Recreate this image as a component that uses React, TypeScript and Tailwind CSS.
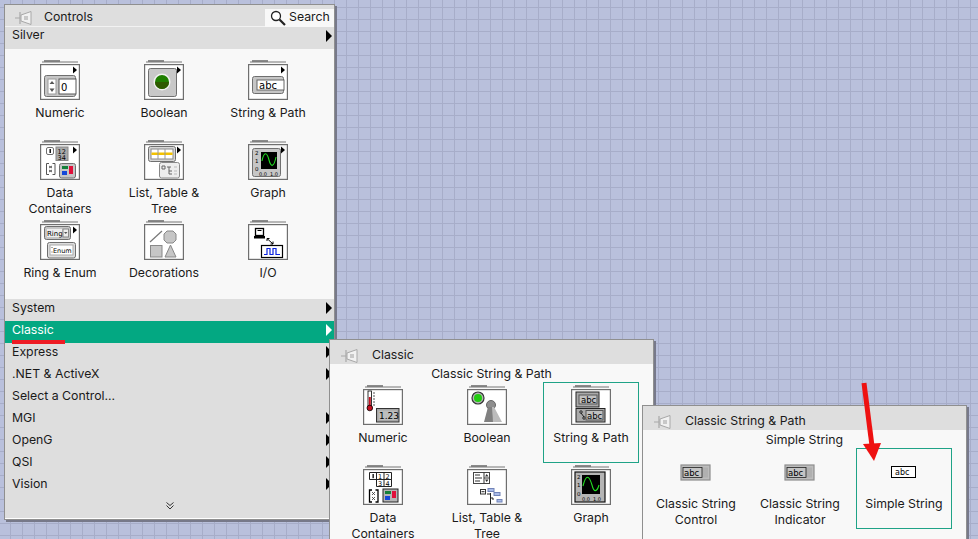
import type { ReactNode } from "react";

const G = "#6f6f6f";

function Frame({ children, arrow, bg = "#ffffff" }: { children?: ReactNode; arrow?: boolean; bg?: string }) {
  return (
    <svg width="40" height="40" viewBox="0 0 40 40" className="block">
      <rect x="4" y="0" width="16" height="2" fill="#8a8a8a" />
      <rect x="2" y="1.5" width="36" height="1" fill="#777777" />
      <rect x="0.6" y="4.6" width="38.8" height="34.8" fill={bg} stroke={G} strokeWidth="1.2" />
      {children}
      {arrow && <path d="M33 6.5 L37 10 L33 13.5 Z" fill="#000000" />}
    </svg>
  );
}

function Mono({ x, y, size = 10, children, fill = "#000000" }: { x: number; y: number; size?: number; children: ReactNode; fill?: string }) {
  return (
    <text x={x} y={y} fontSize={size} fontFamily="'DejaVu Sans', sans-serif" fill={fill}>
      {children}
    </text>
  );
}

const icons: Record<string, ReactNode> = {
  numeric: (
    <Frame arrow>
      <rect x="4.5" y="15.5" width="31" height="21" rx="2" fill="#c6c6c6" stroke={G} />
      <rect x="8" y="19" width="8" height="15" fill="#ffffff" stroke="#999999" />
      <path d="M12 21 L14.5 24 L9.5 24 Z M12 32 L14.5 28.5 L9.5 28.5 Z" fill="#555555" />
      <rect x="19" y="19" width="17" height="15" fill="#ffffff" stroke="#555555" />
      <Mono x={21} y={30.5} size={10}>0</Mono>
    </Frame>
  ),
  boolean: (
    <Frame arrow>
      <rect x="4.5" y="8.5" width="28" height="28" rx="2" fill="#c8c8c8" stroke={G} />
      <circle cx="18" cy="22" r="8.5" fill="#f2f2f2" />
      <circle cx="18" cy="22" r="7" fill="#1f7f00" />
      <path d="M11 22 A7 7 0 0 0 25 22 Z" fill="#2e5a00" />
    </Frame>
  ),
  string: (
    <Frame arrow>
      <rect x="4.5" y="16.5" width="31" height="17" rx="2" fill="#c6c6c6" stroke={G} />
      <rect x="9" y="20" width="27" height="10" fill="#ffffff" stroke="#666666" />
      <Mono x={11} y={28.5} size={10}>abc</Mono>
    </Frame>
  ),
  data: (
    <Frame arrow>
      <rect x="6.5" y="7.5" width="7" height="7" rx="1.5" fill="#ffffff" stroke={G} />
      <rect x="9.5" y="9" width="1.4" height="4" fill="#000000" />
      <rect x="16" y="7" width="12" height="13.5" fill="#a9a9a9" stroke="#888888" />
      <Mono x={17.5} y={13.5} size={6.5}>12</Mono>
      <Mono x={17.5} y={19.5} size={6.5}>34</Mono>
      <path d="M9 23.5 H6.5 V34.5 H9 M12.5 23.5 H15 V34.5 H12.5" fill="none" stroke="#555555" />
      <path d="M9 26 L12 28 M12 26 L9 28 M9 30 L12 32 M12 30 L9 32" stroke="#333333" strokeWidth="0.8" />
      <rect x="19.5" y="23.5" width="16" height="14.5" rx="2" fill="#c6c6c6" stroke={G} />
      <rect x="22" y="26" width="6" height="3" fill="#14803a" />
      <rect x="22" y="31" width="5" height="4" fill="#1447d8" />
      <rect x="29" y="26" width="4" height="8" fill="#e0103a" />
    </Frame>
  ),
  list: (
    <Frame arrow>
      <rect x="4.5" y="6.5" width="27" height="15" rx="2" fill="#d6d6d6" stroke={G} />
      <rect x="7" y="9" width="22" height="10" fill="#ffffff" stroke="#888888" />
      <rect x="7.5" y="12.5" width="21" height="2.5" fill="#f3c200" />
      <path d="M14 9 V19 M21 9 V19" stroke="#999999" />
      <rect x="15.5" y="22.5" width="20" height="15.5" rx="2" fill="#eeeeee" stroke="#888888" />
      <path d="M18 26 H21 V29 H18 Z M23 27 H27 M25 27 V34 H28 M25 31 H28" fill="none" stroke="#666666" />
      <path d="M30 27 H33 M30 31 H33 M30 34 H33" stroke="#bbbbbb" />
    </Frame>
  ),
  graph: (
    <Frame arrow bg="#f4f4f4">
      <rect x="4.5" y="8.5" width="28" height="28" rx="2" fill="#c6c6c6" stroke={G} />
      <rect x="13" y="12" width="16" height="17" fill="#000000" />
      <path d="M14 21 C16 11 19 12 21 20 C23 28 26 27 28 17" fill="none" stroke="#22dd22" strokeWidth="1.1" />
      <Mono x={7} y={15} size={5.5}>2</Mono>
      <Mono x={7} y={23} size={5.5}>1</Mono>
      <Mono x={7} y={31} size={5.5}>0</Mono>
      <Mono x={11} y={35.5} size={5}>0.0</Mono>
      <Mono x={22} y={35.5} size={5}>1.0</Mono>
    </Frame>
  ),
  ring: (
    <Frame arrow>
      <rect x="4.5" y="6.5" width="26" height="13" rx="2" fill="#c6c6c6" stroke={G} />
      <rect x="7" y="9" width="15" height="8" fill="#eeeeee" />
      <Mono x={7} y={16} size={7}>Ring</Mono>
      <rect x="23" y="9" width="5.5" height="8" fill="#eeeeee" stroke="#888888" />
      <path d="M24 12 H27.5 L25.75 14 Z" fill="#555555" />
      <rect x="7.5" y="22.5" width="28" height="15.5" rx="2" fill="#dddddd" stroke={G} />
      <rect x="10" y="25" width="23" height="10" fill="#ffffff" stroke="#aaaaaa" />
      <Mono x={13} y={33} size={6.5}>Enum</Mono>
      <path d="M11.5 27.5 H12.5 M11.5 32 H12.5" stroke="#555555" />
    </Frame>
  ),
  deco: (
    <Frame>
      <path d="M6 22 L18 11" stroke="#777777" strokeWidth="1.2" />
      <path d="M23 11 H29 L32 14 V20 L29 23 H23 L20 20 V14 Z" fill="#c6c6c6" stroke="#888888" />
      <rect x="6.5" y="25.5" width="11.5" height="11.5" fill="#c6c6c6" stroke="#888888" />
      <path d="M26.5 25 L32 37 H21 Z" fill="#c6c6c6" stroke="#888888" />
    </Frame>
  ),
  io: (
    <Frame>
      <rect x="7.5" y="8.5" width="8" height="7" fill="#ffffff" stroke="#000000" strokeWidth="1.3" />
      <rect x="9.5" y="10" width="4" height="1" fill="#000000" />
      <rect x="6" y="16" width="11" height="2.5" fill="#000000" />
      <path d="M19 18.5 L25 24 M19 18.5 H21.5 M19 18.5 V21 M25 24 H22.5 M25 24 V21.5" stroke="#000000" fill="none" />
      <rect x="13.5" y="25.5" width="21" height="12" fill="#ffffff" stroke="#000000" strokeWidth="1.2" />
      <path d="M16 34.5 H19 V28.5 H22 V34.5 H25 V28.5 H28 V34.5 H32" fill="none" stroke="#0a22e0" strokeWidth="1.2" />
    </Frame>
  ),
  cNumeric: (
    <Frame>
      <rect x="5" y="6" width="3.5" height="15" fill="#ffffff" stroke="#000000" strokeWidth="0.8" />
      <rect x="5.8" y="12" width="2" height="10" fill="#c41020" />
      <circle cx="6.8" cy="23" r="2.8" fill="#c41020" stroke="#000000" strokeWidth="0.8" />
      <path d="M10 8 H12 M10 11 H12 M10 14 H12 M10 17 H12 M10 20 H12" stroke="#555555" />
      <rect x="13.5" y="23.5" width="22.5" height="13.5" fill="#a6a6a6" stroke="#333333" />
      <rect x="15.5" y="25.5" width="18.5" height="9.5" fill="#bdbdbd" />
      <Mono x={16} y={34} size={9}>1.23</Mono>
    </Frame>
  ),
  cBoolean: (
    <Frame>
      <circle cx="11" cy="13" r="6" fill="#b5b5b5" stroke="#333333" strokeWidth="1.2" />
      <circle cx="11" cy="13" r="4" fill="#22cc11" />
      <circle cx="24" cy="20" r="4.5" fill="#8e8e8e" stroke="#666666" />
      <path d="M21 22 H27 L35 37 H26 Z" fill="#bcbcbc" />
      <path d="M21 22 H25 L26 37 H17 Z" fill="#808080" />
    </Frame>
  ),
  cString: (
    <Frame>
      <rect x="5" y="7" width="23" height="15" fill="#aaaaaa" stroke="#222222" />
      <rect x="8" y="10" width="18" height="9" fill="#c0c0c0" stroke="#555555" />
      <Mono x={10} y={18} size={8.5}>abc</Mono>
      <rect x="5" y="23.5" width="29" height="13.5" fill="#aaaaaa" stroke="#222222" />
      <path d="M9 26 H11 V28 H9 Z M12 32 H14 V34 H12 Z M10 28 L13 32" fill="#ffffff" stroke="#111111" strokeWidth="0.9" />
      <rect x="15" y="25.5" width="17" height="9.5" fill="#c0c0c0" stroke="#555555" />
      <Mono x={16} y={33.5} size={8.5}>abc</Mono>
    </Frame>
  ),
  cData: (
    <Frame>
      <path d="M6.5 7.5 H28.5 V14.5 H6.5 Z M13.5 7.5 V14.5 M21 7.5 V14.5 M13.5 14.5 H28.5 V21.5 H13.5 Z M21 14.5 V21.5" fill="none" stroke="#222222" />
      <rect x="9.5" y="9" width="1.3" height="4.2" fill="#000000" />
      <Mono x={15} y={13.5} size={6.5}>1</Mono>
      <Mono x={22.5} y={13.5} size={6.5}>2</Mono>
      <Mono x={15} y={20.5} size={6.5}>3</Mono>
      <Mono x={22.5} y={20.5} size={6.5}>4</Mono>
      <path d="M9 25 H6.5 V37 H9 M12.5 25 H15 V37 H12.5" fill="none" stroke="#000000" strokeWidth="1.3" />
      <path d="M9 27 L12 30 M12 27 L9 30 M9 32 L12 35 M12 32 L9 35" stroke="#333333" strokeWidth="0.8" />
      <rect x="20" y="24" width="15" height="13" fill="#b5b5b5" stroke="#222222" />
      <rect x="22" y="26" width="6" height="3" fill="#14803a" />
      <rect x="22" y="31" width="5" height="4" fill="#1447d8" />
      <rect x="29" y="26" width="4" height="7" fill="#e0103a" />
    </Frame>
  ),
  cList: (
    <Frame>
      <rect x="6.5" y="7.5" width="16" height="11" fill="#ffffff" stroke="#444444" />
      <path d="M8 10 H13 M8 13 H15 M8 16 H13 M17 7.5 V18.5 M17 13 H22.5" stroke="#333333" />
      <path d="M19.7 9 L21.5 11.5 H18 Z M19.7 17 L21.5 14.5 H18 Z" fill="#333333" />
      <rect x="13.5" y="24.5" width="5" height="4.5" fill="#ffffff" stroke="#333333" />
      <path d="M14.5 26.7 H17.5 M23.5 28 V39 M23.5 33 H26 V35 M23.5 29 H20" stroke="#222222" fill="none" />
      <rect x="21" y="23.5" width="6" height="3" fill="#a9bbe8" stroke="#7284b8" />
      <rect x="27" y="27.5" width="6" height="3" fill="#a9bbe8" stroke="#7284b8" />
      <rect x="30" y="34.5" width="5" height="2.5" fill="#a9bbe8" stroke="#7284b8" />
    </Frame>
  ),
  cGraph: (
    <Frame bg="#ffffff">
      <rect x="4" y="7" width="30" height="30" fill="#b5b5b5" stroke="#111111" strokeWidth="1.2" />
      <rect x="11" y="10" width="18" height="19" fill="#000000" />
      <path d="M12 21 C15 9 18 10 21 20 C23 28 26 27 28 20" fill="none" stroke="#22dd22" strokeWidth="1.1" />
      <Mono x={6} y={14} size={5.5}>2</Mono>
      <Mono x={6} y={22} size={5.5}>1</Mono>
      <Mono x={6} y={31} size={5.5}>0</Mono>
      <Mono x={11} y={35.5} size={5}>0.0</Mono>
      <Mono x={22} y={35.5} size={5}>1.0</Mono>
    </Frame>
  ),
  classicControl: (
    <svg width="40" height="40" viewBox="0 0 40 40" className="block">
      <rect x="5" y="14" width="29" height="15" fill="#bdbdbd" stroke="#8e8e8e" strokeWidth="1.2" />
      <rect x="7" y="16.5" width="25" height="10" fill="#b0b0b0" />
      <rect x="7" y="16.5" width="19" height="10" fill="#c4c4c4" stroke="#222222" strokeWidth="0.8" />
      <Mono x={8} y={25} size={8.5}>abc</Mono>
    </svg>
  ),
  simple: (
    <svg width="40" height="40" viewBox="0 0 40 40" className="block">
      <rect x="7.5" y="15.5" width="24" height="11" fill="#ffffff" stroke="#000000" />
      <Mono x={11} y={24} size={8}>abc</Mono>
    </svg>
  ),
};

function Pin() {
  return (
    <svg width="18" height="16" viewBox="0 0 18 16" className="block">
      <path d="M0 8 H5 M5 2 V14" stroke="#a8a8a8" strokeWidth="1.2" />
      <path d="M6 5 L16 1.5 V14.5 L6 11 Z" fill="#f1f1f1" stroke="#a8a8a8" />
      <path d="M9 6 H13 V10 H9 Z" fill="#c8c8c8" />
    </svg>
  );
}

function Tile({ icon, label, selected }: { icon: string; label: string; selected?: boolean }) {
  return (
    <div className="relative flex flex-col items-center">
      {icons[icon]}
      <div className="mt-[5px] w-[92px] text-center text-[12.3px] leading-4 text-[#1a1a1a]">{label}</div>
      {selected && <div className="absolute left-[4px] top-[-3px] h-[81px] w-[96px] border border-[#1fa387]" />}
    </div>
  );
}

function Tiles({ children }: { children: ReactNode }) {
  return <div className="grid grid-cols-[repeat(3,104px)] auto-rows-[80px]">{children}</div>;
}

function MenuRow({ label, arrow = true, active, lift = "pb-[4px]" }: { label: string; arrow?: boolean; active?: boolean; lift?: string }) {
  return (
    <div className={`flex h-[22px] items-center justify-between pl-[7px] pr-[2px] text-[12.3px] ${lift} ${active ? "bg-[#03a882] text-white" : "bg-[#dedede] text-[#1a1a1a]"}`}>
      <span>{label}</span>
      {arrow && <span className={`h-0 w-0 border-y-[6px] border-l-[6px] border-y-transparent ${active ? "border-l-white" : "border-l-black"}`} />}
    </div>
  );
}

function Header({ title }: { title: string }) {
  return (
    <div className="flex h-[24px] items-center bg-[#dedede] pl-[11px] pt-[7px] text-[12.3px] text-[#1a1a1a]">
      <Pin />
      <span className="ml-[13px]">{title}</span>
    </div>
  );
}

export default function App() {
  return (
    <div className="relative h-[539px] w-[978px] overflow-hidden bg-[#b9c0dc] bg-[linear-gradient(#a7adc9_1px,transparent_1px),linear-gradient(90deg,#a7adc9_1px,transparent_1px)] bg-[size:12px_12px] bg-[position:10px_7px] font-['Inter',sans-serif]">
      {/* Controls palette */}
      <div className="absolute left-[4px] top-[4px] w-[331px] border border-[#8f8f8f] bg-[#dedede] shadow-[2px_2px_0_#77798a]">
        <div className="flex h-[22px] items-center border-b border-[#f2f2f2] bg-[#dedede] pl-[10px] pt-[4px] text-[12.3px] text-[#1a1a1a]">
          <Pin />
          <span className="ml-[11px]">Controls</span>
          <div className="ml-auto flex h-[18px] w-[69px] items-center gap-[3px] bg-[#f8f8f8] pl-[5px]">
            <svg width="16" height="16" viewBox="0 0 16 16">
              <circle cx="6" cy="6" r="4.5" fill="#ffffff" stroke="#222222" strokeWidth="1.3" />
              <path d="M9.5 9.5 L15 15" stroke="#222222" strokeWidth="2.2" />
            </svg>
            <span>Search</span>
          </div>
        </div>
        <MenuRow label="Silver" lift="pb-[5px]" />
        <div className="h-[250px] bg-[#f8f8f8] pl-[3px] pt-[11px]">
          <Tiles>
            <Tile icon="numeric" label="Numeric" />
            <Tile icon="boolean" label="Boolean" />
            <Tile icon="string" label="String & Path" />
            <Tile icon="data" label="Data Containers" />
            <Tile icon="list" label="List, Table & Tree" />
            <Tile icon="graph" label="Graph" />
            <Tile icon="ring" label="Ring & Enum" />
            <Tile icon="deco" label="Decorations" />
            <Tile icon="io" label="I/O" />
          </Tiles>
        </div>
        <MenuRow label="System" />
        <MenuRow label="Classic" active />
        <MenuRow label="Express" />
        <MenuRow label=".NET & ActiveX" />
        <MenuRow label="Select a Control..." arrow={false} />
        <MenuRow label="MGI" />
        <MenuRow label="OpenG" />
        <MenuRow label="QSI" />
        <MenuRow label="Vision" />
        <div className="flex h-[21px] items-center justify-center bg-[#dedede] pb-[3px]">
          <svg width="8" height="8" viewBox="0 0 8 8">
            <path d="M0.5 0.5 L4 3.5 L7.5 0.5 M0.5 3.5 L4 7 L7.5 3.5" fill="none" stroke="#333333" />
          </svg>
        </div>
        <div className="h-px bg-white" />
      </div>

      {/* red underline under Classic */}
      <div className="absolute left-[12px] top-[340px] h-[3.5px] w-[53px] bg-[#ee1c25]" />

      {/* Classic palette */}
      <div className="absolute left-[329px] top-[339px] h-[210px] w-[325px] border border-[#8f8f8f] bg-[#f8f8f8] shadow-[2px_2px_0_#77798a]">
        <Header title="Classic" />
        <div className="h-[21px] text-center text-[12.3px] leading-[19px] text-[#1a1a1a]">Classic String & Path</div>
        <div className="pl-[1px]">
          <Tiles>
            <Tile icon="cNumeric" label="Numeric" />
            <Tile icon="cBoolean" label="Boolean" />
            <Tile icon="cString" label="String & Path" selected />
            <Tile icon="cData" label="Data Containers" />
            <Tile icon="cList" label="List, Table & Tree" />
            <Tile icon="cGraph" label="Graph" />
          </Tiles>
        </div>
      </div>

      {/* Classic String & Path palette */}
      <div className="absolute left-[642px] top-[405px] h-[150px] w-[325px] border border-[#8f8f8f] bg-[#f8f8f8] shadow-[2px_2px_0_#77798a]">
        <Header title="Classic String & Path" />
        <div className="h-[21px] text-center text-[12.3px] leading-[19px] text-[#1a1a1a]">Simple String</div>
        <div className="pl-[1px]">
          <Tiles>
            <Tile icon="classicControl" label="Classic String Control" />
            <Tile icon="classicControl" label="Classic String Indicator" />
            <Tile icon="simple" label="Simple String" selected />
          </Tiles>
        </div>
      </div>

      {/* red arrow annotation */}
      <svg width="24" height="84" viewBox="0 0 24 84" className="absolute left-[860px] top-[380px]">
        <path d="M4 3 L12 66" stroke="#ee1111" strokeWidth="5" />
        <path d="M3 64 L21 63 L14 81 Z" fill="#ee1111" />
      </svg>
    </div>
  );
}
